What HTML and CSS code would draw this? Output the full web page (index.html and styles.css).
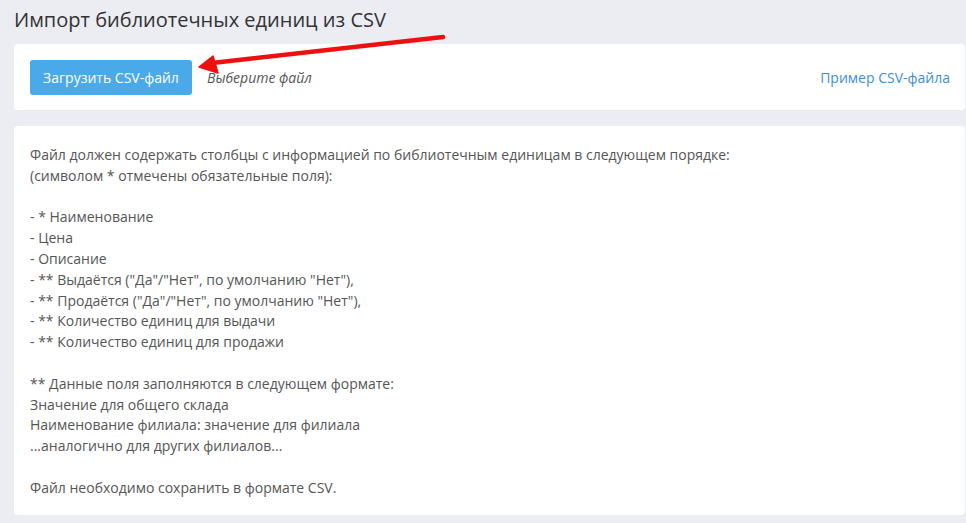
FILE: index.html
```html
<!DOCTYPE html>
<html lang="ru">
<head>
<meta charset="utf-8">
<title>Импорт библиотечных единиц из CSV</title>
<link rel="stylesheet" href="styles.css">
</head>
<body>
<div class="page">
  <h1 class="title">Импорт библиотечных единиц из CSV</h1>
  <div class="card upload">
    <div class="upload-left">
      <button class="btn">Загрузить CSV-файл</button>
      <span class="hint">Выберите файл</span>
    </div>
    <a class="link" href="#">Пример CSV-файла</a>
  </div>
  <div class="card info">
    <p>Файл должен содержать столбцы с информацией по библиотечным единицам в следующем порядке:<br>(символом * отмечены обязательные поля):</p>
    <p>- * Наименование<br>- Цена<br>- Описание<br>- ** Выдаётся ("Да"/"Нет", по умолчанию "Нет"),<br>- ** Продаётся ("Да"/"Нет", по умолчанию "Нет"),<br>- ** Количество единиц для выдачи<br>- ** Количество единиц для продажи</p>
    <p>** Данные поля заполняются в следующем формате:<br>Значение для общего склада<br>Наименование филиала: значение для филиала<br>...аналогично для других филиалов...</p>
    <p>Файл необходимо сохранить в формате CSV.</p>
  </div>
  <svg class="arrow" width="966" height="120" viewBox="0 0 966 120">
    <line x1="443" y1="37" x2="212" y2="63" stroke="#f00f0f" stroke-width="4.5" stroke-linecap="round"/>
    <polygon points="199,67 213,56 218,73" fill="#f00f0f" stroke="#f00f0f" stroke-width="1.5" stroke-linejoin="round"/>
  </svg>
</div>
</body>
</html>
```

FILE: styles.css
```css
html, body {
  margin: 0;
  padding: 0;
  background: #ebedf2;
}
body {
  font-family: "Open Sans", "Noto Sans", sans-serif;
  color: #555;
  font-size: 14px;
}
.page {
  position: relative;
  padding: 0 1px 0 14px;
  width: 951px;
}
.title {
  margin: 0;
  padding: 6px 0 0 0;
  height: 38px;
  font-size: 20px;
  font-weight: 400;
  line-height: 28px;
  color: #333;
}
.card {
  background: #fff;
  border-radius: 4px;
}
.upload {
  height: 66px;
  display: flex;
  align-items: center;
  justify-content: space-between;
  padding: 0 15px 0 16px;
  margin-bottom: 16px;
}
.upload-left {
  display: flex;
  align-items: center;
  gap: 15px;
}
.btn {
  font-family: inherit;
  font-size: 14px;
  color: #fff;
  background: #4aa9e9;
  border: none;
  border-radius: 3px;
  height: 35px;
  width: 162px;
  padding: 0;
  cursor: pointer;
}
.hint {
  font-style: italic;
  font-size: 14px;
  color: #555;
}
.link {
  color: #3d8fd3;
  text-decoration: none;
  font-size: 14px;
}
.info {
  padding: 19px 16px 17px 16px;
  height: 353px;
  line-height: 20.8px;
}
.info p {
  margin: 0 0 20.8px 0;
}
.info p:last-child {
  margin-bottom: 0;
}
.arrow {
  position: absolute;
  left: 0;
  top: 0;
  pointer-events: none;
}
```
